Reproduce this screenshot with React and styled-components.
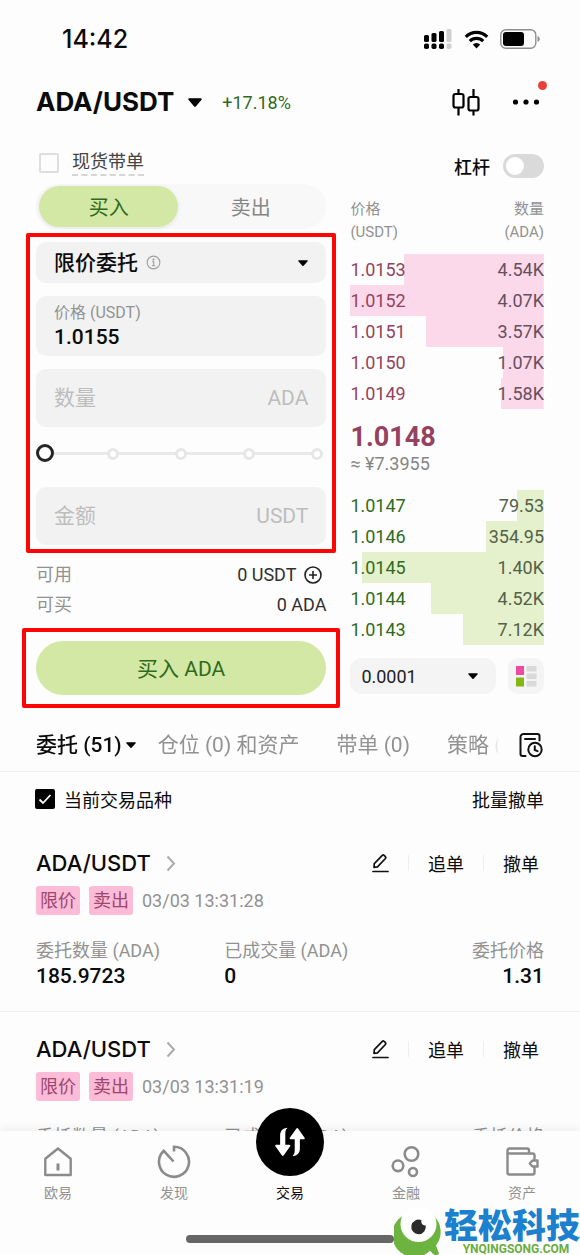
import React, { useState } from "react"
import styled, { createGlobalStyle, css } from "styled-components"

const colors = {
  text: "#0b0b0b",
  gray: "#929292",
  lightGray: "#bdbdbd",
  field: "#f2f2f2",
  line: "#efefef",
  green: "#2f6b1e",
  greenFill: "#d3e8a4",
  greenDepth: "#e5f1cd",
  red: "#94425f",
  redDepth: "#fbd9eb",
  mark: "#fb0505",
}

const GlobalStyle = createGlobalStyle`
  * {
    box-sizing: border-box;
  }

  body {
    margin: 0;
    background: #fdfdfd;
    color: ${colors.text};
    font-family: Roboto, "Noto Sans CJK SC", sans-serif;
    font-size: 18px;
  }

  button,
  input,
  select {
    margin: 0;
    padding: 0;
    border: 0;
    background: none;
    color: inherit;
    font: inherit;
    outline: none;
  }

  svg {
    display: block;
    flex-shrink: 0;
  }
`

const Screen = styled.div`
  position: relative;
  display: flex;
  flex-direction: column;
  height: 100vh;
  overflow: hidden;
`

const StatusBar = styled.div`
  display: flex;
  align-items: center;
  justify-content: space-between;
  padding: 24px 40px 0 62px;
`

const Clock = styled.div`
  font-family: Inter, sans-serif;
  font-size: 25px;
  font-weight: 500;
  line-height: 30px;
`

const StatusIcons = styled.div`
  display: flex;
  align-items: center;
  gap: 11px;
`

const Header = styled.header`
  display: flex;
  align-items: center;
  justify-content: space-between;
  padding: 30px 40px 0 36px;
`

const PairButton = styled.button`
  display: flex;
  align-items: center;
  gap: 14px;
  font-family: Inter, sans-serif;
  font-size: 26px;
  font-weight: 700;
  line-height: 36px;
`

const PairInfo = styled.div`
  display: flex;
  align-items: center;
  gap: 20px;
`

const Change = styled.span`
  color: ${colors.green};
`

const HeaderActions = styled.div`
  display: flex;
  align-items: center;
  gap: 32px;
`

const IconButton = styled.button`
  position: relative;
  display: flex;
  align-items: center;
  justify-content: center;
`

const Dot = styled.span`
  position: absolute;
  top: -17px;
  right: -7px;
  width: 9px;
  height: 9px;
  border-radius: 50%;
  background: #e6423c;
`

const Trade = styled.main`
  display: grid;
  grid-template-columns: 3fr 2fr;
  gap: 24px;
  padding: 24px 36px 0;
`

const Column = styled.div`
  display: flex;
  flex-direction: column;
  min-width: 0;
`

const CopyLabel = styled.label`
  display: flex;
  align-items: center;
  gap: 13px;
  height: 38px;
  padding: 2px 0 2px 3px;
  color: #444;

  span {
    line-height: 24px;
    border-bottom: 2px dashed #d5d5d5;
  }
`

const CheckBox = styled.input`
  appearance: none;
  width: 20px;
  height: 20px;
  border: 2px solid #dedede;
  border-radius: 2px;

  &:checked {
    border-color: #000;
    background: #000;
  }
`

const SideTabs = styled.div`
  display: grid;
  grid-template-columns: 24fr 25fr;
  margin-top: 2px;
  padding: 2px 3px;
  border-radius: 22px;
  background: #f8f8f8;
`

const SideTab = styled.button`
  height: 41px;
  border-radius: 21px;
  font-size: 20px;
  color: ${props => (props.$active ? colors.green : "#858585")};
  ${props =>
    props.$active &&
    css`
      background: ${colors.greenFill};
      box-shadow: 0 1px 5px rgba(0, 0, 0, 0.08);
    `}
`

const OrderForm = styled.div`
  display: flex;
  flex-direction: column;
  gap: 13px;
  margin: 4px -10px 0;
  padding: 5px 6px 4px;
  border: 4px solid ${colors.mark};
  border-radius: 2px;
`

const Field = styled.label`
  display: flex;
  align-items: center;
  gap: 8px;
  height: ${props => (props.$short ? 41 : 58)}px;
  padding: 0 18px;
  border-radius: 10px;
  background: ${colors.field};
  font-size: 21px;
  color: ${colors.lightGray};

  input {
    flex: 1;
    min-width: 0;
  }

  input::placeholder {
    color: ${colors.lightGray};
    opacity: 1;
  }
`

const StackedField = styled(Field)`
  flex-direction: column;
  align-items: stretch;
  justify-content: center;
  gap: 0;
  height: 60px;
  font-size: 16px;
  line-height: 22px;
  color: ${colors.gray};

  input {
    flex: none;
    height: 26px;
    font-size: 21px;
    font-weight: 500;
    color: ${colors.text};
  }
`

const TypeSelect = styled.select`
  appearance: none;
  field-sizing: content;
  font-size: 21px;
  font-weight: 500;
  color: ${colors.text};
`

const Spacer = styled.span`
  flex: 1;
`

const Slider = styled.div`
  position: relative;
  display: flex;
  align-items: center;
  height: 26px;
  margin-bottom: 8px;

  input {
    position: relative;
    appearance: none;
    width: 100%;
    height: 18px;
  }

  input::-webkit-slider-thumb {
    appearance: none;
    width: 18px;
    height: 18px;
    border: 3px solid #242424;
    border-radius: 50%;
    background: #fff;
  }
`

const Rail = styled.div`
  position: absolute;
  left: 9px;
  right: 3px;
  top: 12px;
  height: 3px;
  display: flex;
  align-items: center;
  justify-content: space-between;
  background: #e9e9e9;

  i {
    width: 12px;
    height: 12px;
    border: 3px solid #e6e6e6;
    border-radius: 50%;
    background: #fff;
  }
  i:first-child {
    width: 0;
    visibility: hidden;
  }
`

const Balance = styled.dl`
  display: flex;
  flex-direction: column;
  margin: 7px 0 8px;
`

const BalanceRow = styled.div`
  display: flex;
  justify-content: space-between;
  line-height: 30px;

  dt {
    color: ${colors.gray};
  }
  dd {
    display: flex;
    align-items: center;
    gap: 8px;
    margin: 0;
    padding-right: ${props => (props.$inset ? 4 : 0)}px;
    color: #303030;
  }
`

const Submit = styled.div`
  margin: 0 -14px;
  padding: 9px 10px;
  border: 4px solid ${colors.mark};
  border-radius: 2px;
`

const BuyButton = styled.button`
  display: block;
  width: 100%;
  height: 54px;
  padding-bottom: 3px;
  border-radius: 27px;
  background: ${colors.greenFill};
  color: ${colors.green};
  font-size: 21px;
`

const Leverage = styled.label`
  display: flex;
  align-items: center;
  justify-content: flex-end;
  gap: 13px;
  height: 44px;
  font-weight: 500;
`

const Switch = styled.input`
  appearance: none;
  display: flex;
  align-items: center;
  width: 41px;
  height: 24px;
  padding: 0 3px;
  border-radius: 12px;
  background: #dadada;

  &::before {
    content: "";
    width: 18px;
    height: 18px;
    border-radius: 50%;
    background: #fff;
  }
`

const Book = styled.table`
  width: 100%;
  margin-top: 10px;
  border-collapse: collapse;

  th {
    padding: 0 0 10px;
    font-size: 15px;
    font-weight: 400;
    line-height: 23px;
    color: ${colors.gray};
    text-align: left;
  }
  th:last-child,
  td:last-child:not(:first-child) {
    text-align: right;
  }
  td {
    padding: 0;
  }
`

const Level = styled.tr`
  height: 31px;
  color: ${props => (props.$side === "ask" ? colors.red : colors.green)};
  background-image: ${props => {
    const fill = props.$side === "ask" ? colors.redDepth : colors.greenDepth
    return `linear-gradient(${fill}, ${fill})`
  }};
  background-position: right center;
  background-repeat: no-repeat;

  td:last-child {
    color: ${props => (props.$side === "ask" ? "#66505e" : "#53614a")};
  }
`

const LastPrice = styled.div`
  padding-top: 12px;
  font-size: 27px;
  font-weight: 700;
  line-height: 32px;
  color: ${colors.red};
`

const Fiat = styled.div`
  padding-bottom: 15px;
  line-height: 22px;
  color: #858585;
`

const BookTools = styled.div`
  display: flex;
  gap: 12px;
  margin-top: 13px;
`

const StepSelect = styled.label`
  flex: 1;
  display: flex;
  align-items: center;
  justify-content: space-between;
  height: 36px;
  padding: 0 18px 0 11px;
  border-radius: 12px;
  background: #f4f4f4;
  color: #222;

  select {
    appearance: none;
    field-sizing: content;
  }
`

const LayoutButton = styled(IconButton)`
  width: 36px;
  height: 36px;
  border-radius: 10px;
  background: #f4f4f4;
`

const TabRow = styled.div`
  display: flex;
  align-items: center;
  gap: 20px;
  margin-top: 10px;
  padding: 0 37px 0 36px;
  height: 54px;
  border-bottom: 1px solid ${colors.line};
`

const Tabs = styled.nav`
  flex: 1;
  display: flex;
  gap: 22px;
  min-width: 0;
  overflow: hidden;
  mask-image: linear-gradient(to left, transparent, #000 12px);
`

const Tab = styled.button`
  display: flex;
  align-items: center;
  gap: 4px;
  flex-shrink: 0;
  padding-right: ${props => (props.$active ? 0 : 15)}px;
  font-size: 21px;
  line-height: 30px;
  font-weight: ${props => (props.$active ? 500 : 400)};
  color: ${props => (props.$active ? colors.text : colors.gray)};
`

const FilterRow = styled.div`
  display: flex;
  align-items: center;
  justify-content: space-between;
  height: 54px;
  padding: 0 36px 0 35px;
`

const FilterLabel = styled.label`
  position: relative;
  display: flex;
  align-items: center;
  gap: 9px;

  svg {
    position: absolute;
    left: 2px;
    pointer-events: none;
  }
`

const Orders = styled.section`
  flex: 1;
  min-height: 0;
  overflow: hidden;
`

const Order = styled.article`
  padding: 22px 36px 22px;
  border-bottom: 1px solid ${colors.line};
`

const OrderHead = styled.div`
  display: flex;
  align-items: center;
  justify-content: space-between;
  height: 30px;
  padding-right: 5px;
`

const OrderPair = styled.a`
  display: flex;
  align-items: center;
  gap: 15px;
  font-family: Inter, sans-serif;
  font-size: 22px;
  font-weight: 500;
  color: inherit;
  text-decoration: none;
`

const OrderActions = styled.div`
  display: flex;
  align-items: center;

  button + button {
    margin-left: 19px;
    padding-left: 20px;
    background: linear-gradient(${colors.line}, ${colors.line}) left center /
      1px 16px no-repeat;
  }
`

const OrderMeta = styled.div`
  display: flex;
  align-items: center;
  gap: 9px;
  height: 30px;
  margin-top: 7px;
  color: ${colors.gray};
`

const Tag = styled.span`
  padding: 0 4px;
  border-radius: 3px;
  background: #fcbbd6;
  color: #9c4770;
  line-height: 29px;
`

const OrderStats = styled.dl`
  display: grid;
  grid-template-columns: 10fr 10fr 7fr;
  margin: 24px 0 0;

  div:last-child {
    text-align: right;
  }
  dt {
    line-height: 24px;
    color: ${colors.gray};
    white-space: nowrap;
  }
  dd {
    margin: 0;
    font-size: 21px;
    font-weight: 500;
    line-height: 26px;
  }
`

const BottomBar = styled.footer`
  position: relative;
  display: flex;
  flex-direction: column;
  align-items: center;
  background: #fdfdfd;
  box-shadow: 0 -3px 8px rgba(0, 0, 0, 0.06);
`

const BottomNav = styled.nav`
  align-self: stretch;
  display: grid;
  grid-template-columns: repeat(5, 1fr);
`

const NavItem = styled.a`
  display: flex;
  flex-direction: column;
  align-items: center;
  justify-content: flex-end;
  gap: 4px;
  height: 72px;
  font-size: 14px;
  line-height: 20px;
  color: ${props => (props.$active ? colors.text : "#929292")};
  text-decoration: none;
`

const TradeCircle = styled.span`
  display: flex;
  flex-shrink: 0;
  align-items: center;
  justify-content: center;
  width: 68px;
  height: 68px;
  margin-bottom: 3px;
  border-radius: 50%;
  background: #000;
`

const HomeIndicator = styled.div`
  width: 36%;
  height: 8px;
  margin: 32px 0 12px;
  border-radius: 4px;
  background: #666;
`

const Brand = styled.div`
  position: absolute;
  right: 0;
  bottom: 0;
  display: flex;
  align-items: flex-end;
  gap: 2px;
`

const BrandText = styled.div`
  display: flex;
  flex-direction: column;
  align-items: center;

  strong {
    font-size: 34px;
    font-weight: 900;
    line-height: 34px;
    color: #1b80cd;
    white-space: nowrap;
  }
  span {
    padding-left: 8px;
    font-size: 12px;
    font-weight: 700;
    line-height: 12px;
    color: #6aad3d;
  }
`

const Caret = ({ width = 10, height = 6 }) => (
  <svg width={width} height={height} viewBox="0 0 12 8" preserveAspectRatio="none">
    <path d="M1 .3h10c.7 0 1 .7.6 1.2L6.700 7.500a.9.9 0 0 1-1.400 0L.4 1.500C0 1 .3.3 1 .3Z" fill="#000" />
  </svg>
)

const SignalIcon = () => (
  <svg width="30" height="22" viewBox="0 0 30 22">
    <g fill="#000">
      <rect x="1" y="7" width="5" height="7" rx="1.500" />
      <rect x="8.500" y="5" width="5" height="9" rx="1.500" />
      <rect x="16" y="3" width="5" height="11" rx="1.500" />
      <rect x="1" y="15.500" width="5" height="5.500" rx="1.800" />
      <rect x="8.500" y="15.500" width="5" height="5.500" rx="1.800" />
      <rect x="16" y="15.500" width="5" height="5.500" rx="1.800" />
    </g>
    <g fill="#cfcfcf">
      <rect x="23.500" y="1" width="5" height="13" rx="1.500" />
      <rect x="23.500" y="15.500" width="5" height="5.500" rx="1.800" />
    </g>
  </svg>
)

const WifiIcon = () => (
  <svg width="25" height="19" viewBox="0 0 24 19">
    <g fill="none" stroke="#000" strokeWidth="3.200">
      <path d="M1.300 6.800a15.200 15.200 0 0 1 21.400 0" />
      <path d="M5.300 11.200a9.500 9.500 0 0 1 13.400 0" />
    </g>
    <path d="M8.300 14.600a5.300 5.300 0 0 1 7.400 0L12 18.500Z" fill="#000" />
  </svg>
)

const BatteryIcon = () => (
  <svg width="40" height="20" viewBox="0 0 40 20">
    <rect x=".8" y=".8" width="35" height="18.400" rx="5" fill="none" stroke="#8f8f8f" strokeWidth="1.400" />
    <rect x="3" y="3" width="21" height="14" rx="3" fill="#000" />
    <path d="M37.500 7v6c1.800-.8 2.300-2 2.300-3S39.300 7.800 37.500 7Z" fill="#8f8f8f" />
  </svg>
)

const CandlesIcon = () => (
  <svg width="28" height="28" viewBox="0 0 28 28" fill="none" stroke="#000" strokeWidth="2.200">
    <rect x="1.500" y="6" width="10" height="13.500" rx="2" />
    <rect x="16.500" y="9" width="10" height="13.500" rx="2" />
    <path d="M6.500 1v5M6.500 19.500v8M21.500 1v8M21.500 22.500v5" />
  </svg>
)

const MoreIcon = () => (
  <svg width="28" height="8" viewBox="0 0 28 8">
    <circle cx="3.500" cy="4" r="2.600" />
    <circle cx="14" cy="4" r="2.600" />
    <circle cx="24.500" cy="4" r="2.600" />
  </svg>
)

const InfoIcon = () => (
  <svg width="15" height="15" viewBox="0 0 16 16" fill="none" stroke="#a0a0a0" strokeWidth="1.200">
    <circle cx="8" cy="8" r="6.800" />
    <path d="M6.500 7.200H8.200V11.500M6.300 11.500h3.600" />
    <circle cx="8" cy="4.900" r=".6" fill="#a0a0a0" />
  </svg>
)

const PlusIcon = () => (
  <svg width="18" height="18" viewBox="0 0 18 18" fill="none" stroke="#222" strokeWidth="1.600">
    <circle cx="9" cy="9" r="8" />
    <path d="M9 5v8M5 9h8" />
  </svg>
)

const BookLayoutIcon = () => (
  <svg width="22" height="22" viewBox="0 0 22 22">
    <rect x="1" y="1" width="8" height="9" fill="#ee4ba0" />
    <rect x="1" y="12.500" width="8" height="9" fill="#83b814" />
    <g fill="#d9d9d9">
      <rect x="11.500" y="1" width="10" height="5.500" />
      <rect x="11.500" y="8.500" width="10" height="5.500" />
      <rect x="11.500" y="16" width="10" height="5.500" />
    </g>
  </svg>
)

const HistoryIcon = () => (
  <svg width="24" height="26" viewBox="0 0 24 26" fill="none" stroke="#111" strokeWidth="2" strokeLinecap="round">
    <path d="M6.500 24H3.500A2 2 0 0 1 1.500 22V5A3 3 0 0 1 4.500 2H18.500A2 2 0 0 1 20.500 4V8.500" />
    <path d="M6 7h10" />
    <circle cx="16" cy="17.500" r="6.700" />
    <path d="M15.800 14.200v3.800l2.800 1.200" />
  </svg>
)

const PencilIcon = () => (
  <svg width="17" height="20" viewBox="0 0 17 20" fill="none" stroke="#111" strokeWidth="1.700" strokeLinejoin="round" strokeLinecap="round">
    <path d="M2 14.300 2.300 10.700 10.300 2.400a1.300 1.300 0 0 1 1.800 0l1.300 1.300a1.300 1.300 0 0 1 0 1.800L5.500 13.800Z" />
    <path d="M1 18.500h15" />
  </svg>
)

const ChevronIcon = () => (
  <svg width="10" height="17" viewBox="0 0 10 17" fill="none" stroke="#ababab" strokeWidth="2">
    <path d="m1.500 1.500 6.500 7-6.500 7" />
  </svg>
)

const CheckIcon = () => (
  <svg width="16" height="16" viewBox="0 0 16 16" fill="none" stroke="#fff" strokeWidth="1.800">
    <path d="m2.500 8.500 3.500 3.500 7.500-8" />
  </svg>
)

const navStroke = { fill: "none", stroke: "#8b8b8b", strokeWidth: 2.4 }

const HomeIcon = () => (
  <svg width="34" height="34" viewBox="0 0 34 34" {...navStroke}>
    <path d="M4.300 13.800 17 3.500l12.700 10.300V30H4.300Z" strokeLinejoin="round" />
    <path d="M17 18.500v7" strokeWidth="3" />
  </svg>
)

const DiscoverIcon = () => (
  <svg width="34" height="34" viewBox="0 0 34 34" {...navStroke} strokeWidth="2.600">
    <path d="M17 6.500V1.800A15 15 0 1 1 6.800 5.800L16.500 16.500" />
  </svg>
)

const FinanceIcon = () => (
  <svg width="34" height="34" viewBox="0 0 34 34" {...navStroke} strokeWidth="2.600">
    <circle cx="22.500" cy="9" r="6.800" />
    <circle cx="9" cy="20.800" r="5.300" />
    <circle cx="24" cy="27" r="4" />
  </svg>
)

const WalletIcon = () => (
  <svg width="34" height="34" viewBox="0 0 34 34" {...navStroke} strokeLinejoin="round">
    <path d="M29.500 14.500V10.500a2 2 0 0 0-2-2H2.500V27.500a2 2 0 0 0 2 2H27.500a2 2 0 0 0 2-2V22" />
    <path d="M2.500 8.500V5.500A2 2 0 0 1 4.500 3.500H22a2 2 0 0 1 2 2V8.500" />
    <path d="M32.500 15.500H27.500L24.800 18.500 27.500 21.500H32.500Z" />
  </svg>
)

const SwapIcon = () => (
  <svg width="32" height="32" viewBox="0 0 34 34" fill="#fff">
    <path d="M13.300 2C9 2.500 6.500 5.500 6.500 10v10H2.200c-.9 0-1.200.8-.7 1.400l7 10c.5.700 1.200.7 1.700 0l7-10c.4-.6.1-1.400-.7-1.400H12V9c0-3.500.5-5.300 1.900-6.300.4-.4.1-.8-.6-.7Z" />
    <path d="M20.700 32C25 31.500 27.500 28.500 27.500 24V14h4.300c.9 0 1.200-.8.700-1.400l-7-10c-.5-.7-1.200-.7-1.700 0l-7 10c-.4.6-.1 1.400.7 1.400H22V25c0 3.500-.5 5.300-1.900 6.300-.4.4-.1.8.6.7Z" />
  </svg>
)

const BrandLogo = () => (
  <svg width="48" height="47" viewBox="0 0 48 47">
    <path d="M8.500 8A22.300 22.300 0 1 0 36 42.800L39.500 46.500Q43.500 48 45 45.500L42 37.500A22.300 22.300 0 0 0 40 8Z" fill="#6cb33f" />
    <circle cx="24.500" cy="16" r="18" fill="#fff" />
    <path d="M27.500 12.200A7.300 7.300 0 1 0 31.700 17.300 3.700 3.700 0 0 1 27.500 12.200Z" fill="#2b2b2b" />
  </svg>
)

const asks = [
  { price: "1.0153", amount: "4.54K", depth: 72 },
  { price: "1.0152", amount: "4.07K", depth: 100 },
  { price: "1.0151", amount: "3.57K", depth: 61 },
  { price: "1.0150", amount: "1.07K", depth: 21 },
  { price: "1.0149", amount: "1.58K", depth: 22 },
]

const bids = [
  { price: "1.0147", amount: "79.53", depth: 14 },
  { price: "1.0146", amount: "354.95", depth: 30 },
  { price: "1.0145", amount: "1.40K", depth: 94 },
  { price: "1.0144", amount: "4.52K", depth: 58 },
  { price: "1.0143", amount: "7.12K", depth: 42 },
]

const orders = [
  { time: "03/03 13:31:28", amount: "185.9723", filled: "0", price: "1.31" },
  { time: "03/03 13:31:19", amount: "185.9723", filled: "0", price: "1.31" },
]

const Levels = ({ side, rows }) => (
  <tbody>
    {rows.map(row => (
      <Level
        key={row.price}
        $side={side}
        style={{ backgroundSize: `${row.depth}% 100%` }}
      >
        <td>{row.price}</td>
        <td>{row.amount}</td>
      </Level>
    ))}
  </tbody>
)

const OrderCard = ({ order }) => (
  <Order>
    <OrderHead>
      <OrderPair href="#order">
        ADA/USDT <ChevronIcon />
      </OrderPair>
      <OrderActions>
        <IconButton aria-label="编辑">
          <PencilIcon />
        </IconButton>
        <button>追单</button>
        <button>撤单</button>
      </OrderActions>
    </OrderHead>
    <OrderMeta>
      <Tag>限价</Tag>
      <Tag>卖出</Tag>
      <span>{order.time}</span>
    </OrderMeta>
    <OrderStats>
      <div>
        <dt>委托数量 (ADA)</dt>
        <dd>{order.amount}</dd>
      </div>
      <div>
        <dt>已成交量 (ADA)</dt>
        <dd>{order.filled}</dd>
      </div>
      <div>
        <dt>委托价格</dt>
        <dd>{order.price}</dd>
      </div>
    </OrderStats>
  </Order>
)

const App = () => {
  const [side, setSide] = useState("buy")
  const [price, setPrice] = useState("1.0155")
  const [current, setCurrent] = useState(true)

  return (
    <Screen>
      <GlobalStyle />
      <StatusBar>
        <Clock>14:42</Clock>
        <StatusIcons>
          <SignalIcon />
          <WifiIcon />
          <BatteryIcon />
        </StatusIcons>
      </StatusBar>

      <Header>
        <PairInfo>
          <PairButton>
            ADA/USDT <Caret width={14} height={9} />
          </PairButton>
          <Change>+17.18%</Change>
        </PairInfo>
        <HeaderActions>
          <IconButton aria-label="K线">
            <CandlesIcon />
          </IconButton>
          <IconButton aria-label="更多">
            <MoreIcon />
            <Dot />
          </IconButton>
        </HeaderActions>
      </Header>

      <Trade>
        <Column>
          <CopyLabel>
            <CheckBox type="checkbox" />
            <span>现货带单</span>
          </CopyLabel>
          <SideTabs>
            <SideTab $active={side === "buy"} onClick={() => setSide("buy")}>
              买入
            </SideTab>
            <SideTab $active={side === "sell"} onClick={() => setSide("sell")}>
              卖出
            </SideTab>
          </SideTabs>

          <OrderForm>
            <Field $short>
              <TypeSelect aria-label="委托类型">
                <option>限价委托</option>
              </TypeSelect>
              <InfoIcon />
              <Spacer />
              <Caret />
            </Field>
            <StackedField>
              价格 (USDT)
              <input value={price} onChange={e => setPrice(e.target.value)} />
            </StackedField>
            <Field>
              <input placeholder="数量" aria-label="数量" />
              ADA
            </Field>
            <Slider>
              <Rail>
                <i />
                <i />
                <i />
                <i />
                <i />
              </Rail>
              <input type="range" defaultValue="0" aria-label="比例" />
            </Slider>
            <Field>
              <input placeholder="金额" aria-label="金额" />
              USDT
            </Field>
          </OrderForm>

          <Balance>
            <BalanceRow $inset>
              <dt>可用</dt>
              <dd>
                0 USDT <PlusIcon />
              </dd>
            </BalanceRow>
            <BalanceRow>
              <dt>可买</dt>
              <dd>0 ADA</dd>
            </BalanceRow>
          </Balance>

          <Submit>
            <BuyButton>买入 ADA</BuyButton>
          </Submit>
        </Column>

        <Column>
          <Leverage>
            杠杆
            <Switch type="checkbox" role="switch" />
          </Leverage>
          <Book>
            <thead>
              <tr>
                <th>
                  价格
                  <br />
                  (USDT)
                </th>
                <th>
                  数量
                  <br />
                  (ADA)
                </th>
              </tr>
            </thead>
            <Levels side="ask" rows={asks} />
            <tbody>
              <tr>
                <td colSpan={2}>
                  <LastPrice>1.0148</LastPrice>
                  <Fiat>≈ ¥7.3955</Fiat>
                </td>
              </tr>
            </tbody>
            <Levels side="bid" rows={bids} />
          </Book>
          <BookTools>
            <StepSelect>
              <select aria-label="价格精度">
                <option>0.0001</option>
              </select>
              <Caret />
            </StepSelect>
            <LayoutButton aria-label="盘口布局">
              <BookLayoutIcon />
            </LayoutButton>
          </BookTools>
        </Column>
      </Trade>

      <TabRow>
        <Tabs>
          <Tab $active>
            委托 (51) <Caret />
          </Tab>
          <Tab>仓位 (0) 和资产</Tab>
          <Tab>带单 (0)</Tab>
          <Tab>策略 (0)</Tab>
        </Tabs>
        <IconButton aria-label="历史">
          <HistoryIcon />
        </IconButton>
      </TabRow>

      <FilterRow>
        <FilterLabel>
          <CheckBox
            type="checkbox"
            checked={current}
            onChange={e => setCurrent(e.target.checked)}
          />
          {current && <CheckIcon />}
          当前交易品种
        </FilterLabel>
        <button>批量撤单</button>
      </FilterRow>

      <Orders>
        {orders.map(order => (
          <OrderCard key={order.time} order={order} />
        ))}
      </Orders>

      <BottomBar>
        <BottomNav>
          <NavItem href="#home">
            <HomeIcon />
            欧易
          </NavItem>
          <NavItem href="#discover">
            <DiscoverIcon />
            发现
          </NavItem>
          <NavItem href="#trade" $active>
            <TradeCircle>
              <SwapIcon />
            </TradeCircle>
            交易
          </NavItem>
          <NavItem href="#finance">
            <FinanceIcon />
            金融
          </NavItem>
          <NavItem href="#assets">
            <WalletIcon />
            资产
          </NavItem>
        </BottomNav>
        <HomeIndicator />
        <Brand>
          <BrandLogo />
          <BrandText>
            <strong>轻松科技</strong>
            <span>YNQINGSONG.COM</span>
          </BrandText>
        </Brand>
      </BottomBar>
    </Screen>
  )
}

export default App
